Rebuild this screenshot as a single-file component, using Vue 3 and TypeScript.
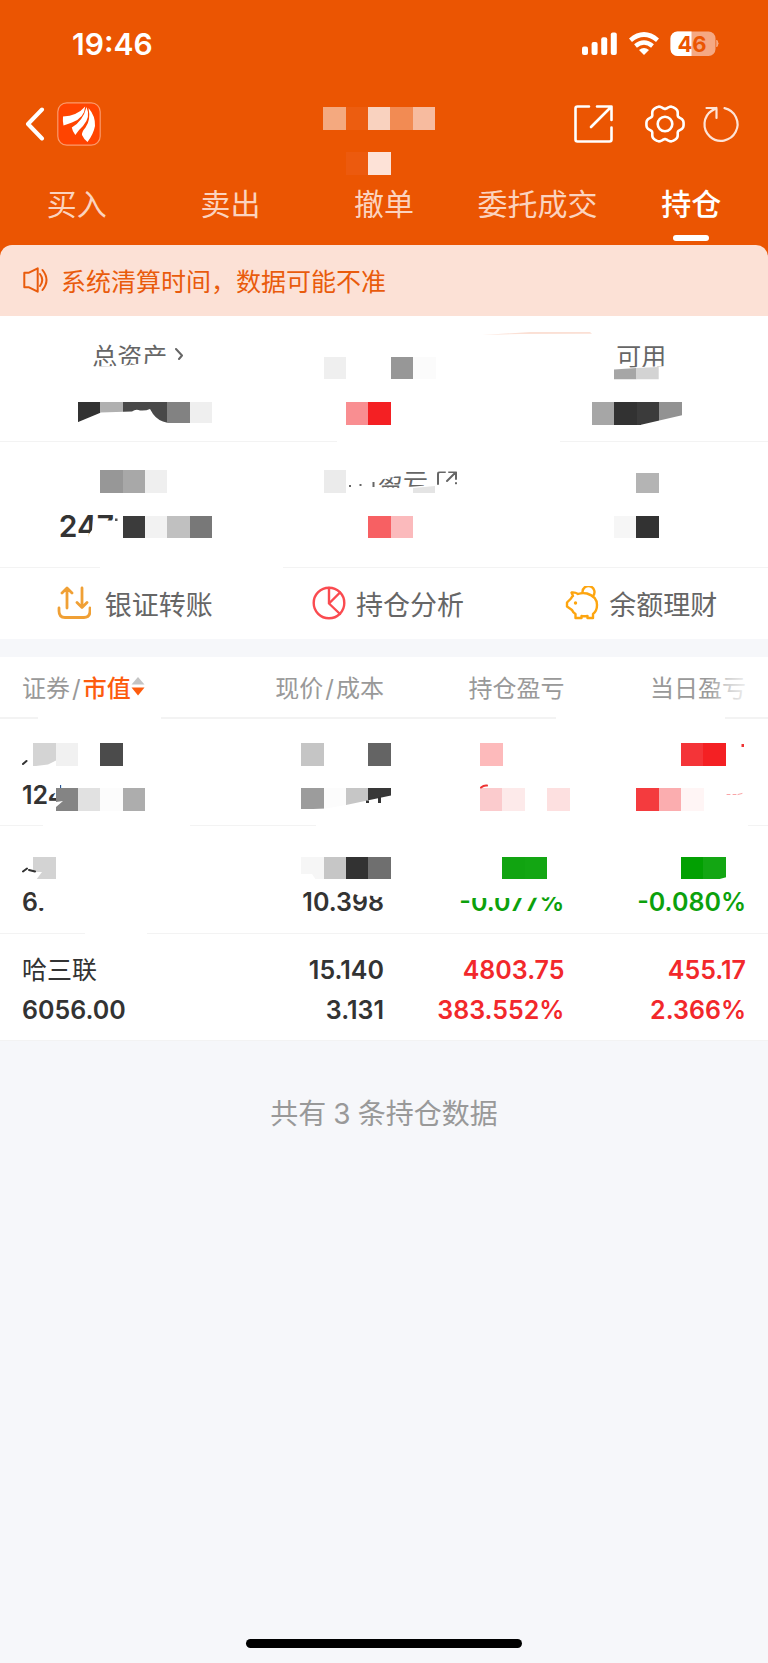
<script setup lang="ts">
import { ref } from 'vue'

type Block = [x: number, y: number, w: number, h: number, fill: string]

interface Cell {
  top: string
  bottom: string
  tone?: 'up' | 'down'
}

const tabs = ['买入', '卖出', '撤单', '委托成交', '持仓']
const activeTab = ref('持仓')

const rows: Cell[][] = [
  [
    { top: '', bottom: '124' },
    { top: '', bottom: '' },
    { top: '', bottom: '', tone: 'up' },
    { top: '', bottom: '', tone: 'up' },
  ],
  [
    { top: '', bottom: '6.' },
    { top: '', bottom: '10.398' },
    { top: '', bottom: '-0.077%', tone: 'down' },
    { top: '', bottom: '-0.080%', tone: 'down' },
  ],
  [
    { top: '哈三联', bottom: '6056.00' },
    { top: '15.140', bottom: '3.131' },
    { top: '4803.75', bottom: '383.552%', tone: 'up' },
    { top: '455.17', bottom: '2.366%', tone: 'up' },
  ],
]

/* Builds a horizontal run of mosaic blocks; an empty colour leaves a hole. */
const cell = 22.33
function run(x: number, y: number, h: number, fills: string[]): Block[] {
  return fills
    .map((fill, i): Block => [x + i * cell, y, cell + 0.2, h, fill])
    .filter((b) => b[4] !== '')
}

const headBlocks: Block[] = [
  ...run(323.4, 107, 22.5, ['#f4a97f', '#ec5d10', '#f9d2bf', '#f28b53', '#f7bb9f']),
  ...run(345.7, 152, 22.5, ['#ec5a0e', '#fde2d7']),
]

const assetBlocks: Block[] = [
  ...run(323.7, 357, 22.3, ['#efefef', '', '', '#979797', '#fbfbfb']),
  ...run(78, 402, 20.6, ['#323232', '#b0b0b0', '#494949', '#494949', '#828282', '#efefef']),
  ...run(346, 402, 22.6, ['#f98e91', '#f42023']),
  ...run(592, 402, 22.6, ['#a6a6a6', '#323232', '#3b3b3b', '#929292']),
  ...run(100.3, 470.4, 22.6, ['#979797', '#a8a8a8', '#efefef']),
  ...run(323.7, 470.4, 22.6, ['#ebebeb']),
  ...run(636.4, 473, 20, ['#b4b4b4']),
  ...run(122.8, 515.6, 22.8, ['#3b3b3b', '#f2f2f2', '#c0c0c0', '#787878']),
  ...run(368.3, 515.6, 22.8, ['#f76063', '#fbbabc']),
  ...run(614, 515.6, 22.8, ['#f6f6f6', '#323232']),
]

const tableBlocks: Block[] = [
  ...run(33.4, 743, 22.6, ['#d4d4d4', '#f1f1f1', '', '#4b4b4b']),
  ...run(301.3, 743, 22.6, ['#c5c5c5', '', '', '#646464']),
  ...run(480, 743, 22.6, ['#fdbabb']),
  ...run(681, 743, 22.6, ['#f43438', '#f42023']),
  ...run(55.7, 788.4, 22.8, ['#848484', '#e1e1e1', '#fcfcfc', '#adadad']),
  ...run(301.3, 788.4, 21, ['#9c9c9c', '#fcfcfc', '#c6c6c6', '#383838']),
  ...run(480, 788.4, 22.8, ['#fbcbcd', '#fdeaea', '', '#fde0e0']),
  ...run(636.4, 788.4, 22.8, ['#f43b3e', '#fbadaf', '#fff5f5']),
  ...run(33.4, 856.8, 22.6, ['#d3d3d3']),
  ...run(301.3, 856.8, 22.6, ['#f6f6f6', '#c6c6c6', '#323232', '#6f6f6f']),
  ...run(502.3, 856.8, 22.6, ['#11a411', '#13a613']),
  ...run(681, 856.8, 22.6, ['#02a002', '#13a613']),
]

/* Six-lobed outline of the settings cog. */
const cogPath =
  Array.from({ length: 73 }, (_, i) => {
    const a = (i * Math.PI) / 36
    const r = 17.3 + 1.8 * Math.cos(6 * a) - 0.5 * Math.cos(12 * a)
    return `${i ? 'L' : 'M'}${(20 + r * Math.cos(a)).toFixed(2)} ${(20 + r * Math.sin(a)).toFixed(2)}`
  }).join('') + 'Z'
</script>

<template>
  <div class="screen">
    <header class="head">
      <div class="status">
        <time class="clock">19:46</time>
        <div class="indicators">
          <svg class="signal" viewBox="0 0 36 24" aria-hidden="true">
            <rect x="0" y="14.5" width="6" height="8.5" rx="2" />
            <rect x="9.6" y="10" width="6" height="13" rx="2" />
            <rect x="19.2" y="5.2" width="6" height="17.8" rx="2" />
            <rect x="28.8" y="0.6" width="6" height="22.4" rx="2" />
          </svg>
          <svg class="wifi" viewBox="0 0 30 24" aria-hidden="true">
            <path d="M1.500 8.200Q15 -3.200 28.500 8.200" stroke-width="4.600" />
            <path d="M6.500 14Q15 7 23.500 14" stroke-width="4.400" />
            <path class="dot" d="M10 18Q15 14.200 20 18L15 23Z" />
          </svg>
          <svg class="battery" viewBox="0 0 50 26" aria-hidden="true">
            <rect x="0.5" y="0.5" width="45" height="24.6" rx="7" fill="#f5a883" />
            <path d="M21.500 .5H7.500a7 7 0 0 0-7 7v10.600a7 7 0 0 0 7 7h14z" fill="#fff" />
            <path d="M47 9.500q2.500 3 0 6z" fill="#f5a883" stroke="#f5a883" />
            <text x="22" y="20.600" text-anchor="middle">46</text>
          </svg>
        </div>
      </div>

      <div class="bar">
        <div class="bar-side">
          <button class="plain" type="button" aria-label="返回">
            <svg class="back" viewBox="0 0 20 34" aria-hidden="true">
              <path d="M17 2.500L3 17L17 31.500" />
            </svg>
          </button>
          <svg class="logo" viewBox="0 0 44 44" aria-hidden="true">
            <rect x="0.8" y="0.8" width="42.400" height="42.400" rx="9" fill="#ff4400" stroke="#fb9a6c" stroke-width="1.200" />
            <path d="M6 14.500Q20 14 28.200 4.500Q27.500 16 15 20.500Q11 22 6.500 23.500Q5.500 19 6 14.500Z" />
            <path d="M14.800 25.500Q26 19 29.500 5Q34 15 26 24Q21.500 28 18.300 33Q15.500 29.500 14.800 25.500Z" />
            <path d="M25 33Q24.500 30 28.500 25.500Q34 18 31.500 6Q38.500 14 38 24Q36.500 32 30.500 40Q27 37.500 25 33Z" />
          </svg>
        </div>
        <div class="bar-tools">
          <button class="plain" type="button" aria-label="分享">
            <svg class="tool" viewBox="0 0 40 40" aria-hidden="true">
              <path d="M16 2.500H4.500q-2 0-2 2V35.500q0 2 2 2H36.500q2 0 2-2V23.500M24 2.500H38.500V16M18 23L38 3" />
            </svg>
          </button>
          <button class="plain cog" type="button" aria-label="设置">
            <svg class="tool" viewBox="0 0 40 40" aria-hidden="true">
              <path :d="cogPath" />
              <circle cx="20" cy="20" r="7.300" />
            </svg>
          </button>
          <button class="plain" type="button" aria-label="刷新">
            <svg class="tool thin" viewBox="0 0 40 40" aria-hidden="true">
              <path d="M23.500 4.200A16.500 16.500 0 1 1 11 6.500M5.500 4H15.500V14M10.500 7L15.500 4" />
            </svg>
          </button>
        </div>
      </div>

      <nav class="tabs" aria-label="交易">
        <button
          v-for="tab in tabs"
          :key="tab"
          type="button"
          class="tab"
          :class="{ active: tab === activeTab }"
          @click="activeTab = tab"
        >
          {{ tab }}
        </button>
      </nav>

      <svg class="veil" viewBox="0 0 768 245" preserveAspectRatio="none" shape-rendering="crispEdges" aria-hidden="true">
        <rect v-for="(b, i) in headBlocks" :key="i" :x="b[0]" :y="b[1]" :width="b[2]" :height="b[3]" :fill="b[4]" />
      </svg>
    </header>

    <div class="notice-wrap">
      <p class="notice">
        <svg class="speaker" viewBox="0 0 26 26" aria-hidden="true">
          <path d="M1.300 5.700H6L14.700 1.300V24.700L6 20.300H1.300ZM17 7Q21.500 13 17 19M19.500 3Q27.500 13 19.500 23" />
        </svg>
        系统清算时间，数据可能不准
      </p>
    </div>

    <section class="assets">
      <div class="asset-row">
        <div class="asset">
          <span class="label leading">
            总资产
            <svg class="chevron" viewBox="0 0 8 14" aria-hidden="true"><path d="M1 1L7 7.500L4 11" /></svg>
          </span>
          <span class="value"></span>
        </div>
        <div class="asset"></div>
        <div class="asset">
          <span class="label">可用</span>
          <span class="value"></span>
        </div>
      </div>
      <div class="asset-row">
        <div class="asset">
          <span class="label"></span>
          <span class="value wide">247</span>
        </div>
        <div class="asset">
          <span class="label trailing">
            盈亏
            <svg class="open" viewBox="0 0 22 22" aria-hidden="true">
              <path d="M9 2H4q-2 0-2 2v16h18v-7M13 2h7v7M11 11l9-9" />
            </svg>
          </span>
          <span class="value"></span>
        </div>
        <div class="asset"></div>
      </div>
      <div class="actions">
        <button type="button" class="action">
          <svg class="action-icon transfer" viewBox="0 0 34 34" aria-hidden="true">
            <path d="M10 22V3M5 7L10 2L15 7M25 2V21M20 16.500L25 21.500L30 16.500M2 22V25q0 6.500 6 6.500H27q6 0 6-6.500V22" />
          </svg>
          银证转账
        </button>
        <button type="button" class="action">
          <svg class="action-icon pie" viewBox="0 0 34 34" aria-hidden="true">
            <circle cx="17" cy="17" r="15.300" />
            <path d="M17 2V17.500L28 28M17 17.500L28 6.500" />
          </svg>
          持仓分析
        </button>
        <button type="button" class="action">
          <svg class="action-icon pig" viewBox="0 0 34 34" aria-hidden="true">
            <path d="M6.500 6.500Q10 6 13 8Q17 6.500 22 7.500Q32 10.500 32 19Q32 25 28 28V32H22.500V30Q19 30.500 16.500 30V32H10.500V28Q8 26.500 7 24L2 20.500V16.500L6 12.500Q7 10.500 8 10Z" />
            <path d="M17.500 6.500A6 6 0 1 1 28 10" />
            <circle class="eye" cx="10.500" cy="17" r="1.700" />
          </svg>
          余额理财
        </button>
      </div>

      <svg class="veil" viewBox="0 316 768 323" preserveAspectRatio="none" aria-hidden="true">
        <g fill="#fff">
          <path d="M337 439H560V445H337ZM100 564H283V571H100Z" />
          <path d="M88 366.500L120 366L135 364.500L170 362.500V382H88Z" />
          <path d="M608 368.500L640 367L668 366V382H608Z" />
          <path d="M93 519H99V520.500H120V544H86L89 534L92 530Z" />
          <path d="M372 462H398L402 475L384 479L372 482ZM398 462H460V471.500H398ZM372 487L400 488L430 485L462 484V502H372Z" />
        </g>
        <path d="M482 335L530 332H590L592 333.800L520 334Z" fill="#fbe0d5" />
        <g shape-rendering="crispEdges">
          <rect v-for="(b, i) in assetBlocks" :key="i" :x="b[0]" :y="b[1]" :width="b[2]" :height="b[3]" :fill="b[4]" />
        </g>
        <path d="M614 369.500L636.500 368V379.300H614Z" fill="#a6a6a6" />
        <path d="M636.500 368L658.700 367V379.300H636.500Z" fill="#d3d3d3" />
        <path d="M413 488L435 486V493H413Z" fill="#e4e4e4" />
        <g fill="#fff">
          <path d="M77 422.500L101 412.500L132 411.500Q136 408.500 140 410.500Q146 411 150 409L153 414Q158 421 167.300 422.700V425H77Z" />
          <path d="M641 424.800L682 415.300V426H641Z" />
        </g>
        <path d="M349 485h2v2h-2zM359.500 484h2v2h-2zM372.500 482h2v5h-2z" fill="#666" />
        <rect x="115" y="518.500" width="2.500" height="2.500" fill="#555" />
      </svg>
    </section>

    <section class="holdings">
      <table>
        <thead>
          <tr>
            <th scope="col">证券<span class="slash">/</span><button type="button" class="sort">市值<svg viewBox="0 0 14 20" aria-hidden="true"><path d="M7 1L13.500 8.500H0.500Z" fill="#c4c4c4" /><path d="M7 19.500L0.500 11.500H13.500Z" fill="#fd5c0e" /></svg></button></th>
            <th scope="col">现价<span class="slash">/</span>成本</th>
            <th scope="col">持仓盈亏</th>
            <th scope="col">当日盈亏</th>
          </tr>
        </thead>
        <tbody>
          <tr v-for="(row, r) in rows" :key="r">
            <td v-for="(c, i) in row" :key="i" :class="c.tone">
              <span class="line">{{ c.top }}</span>
              <span class="line">{{ c.bottom }}</span>
            </td>
          </tr>
        </tbody>
      </table>

      <svg class="veil" viewBox="0 657 768 384" preserveAspectRatio="none" aria-hidden="true">
        <defs>
          <linearGradient id="fade" x1="0" x2="1" y1="0" y2="0">
            <stop offset="0" stop-color="#fff" stop-opacity="0" />
            <stop offset="0.500" stop-color="#fff" stop-opacity="0.550" />
            <stop offset="1" stop-color="#fff" stop-opacity="0.850" />
          </linearGradient>
        </defs>
        <rect x="708" y="672" width="40" height="32" fill="url(#fade)" />
        <path d="M38 715H161V721H38ZM556 715H725V721H556ZM43 823H190V828H43ZM316 823H748V828H316ZM85 931H147V936H85Z" fill="#fff" />
        <path d="M49 782H60V793H55L50 795ZM50 801H62V807H50ZM352 888H386V897.500L378 897L370 895.500L362 897L352 893ZM468 888H565V896.500L530 898H468ZM34 888H50V908H38Z" fill="#fff" />
        <g shape-rendering="crispEdges">
          <rect v-for="(b, i) in tableBlocks" :key="i" :x="b[0]" :y="b[1]" :width="b[2]" :height="b[3]" :fill="b[4]" />
        </g>
        <path d="M300 809.500L326 808.500L346 805L391 795.500V812H300ZM36 766L48 764.500L56 760.500V767H36ZM33 872H42L36 880H33ZM56 811.500V807L63 801L56 802ZM301 874H312L316 880H301ZM716 880L727 877V881Z" fill="#fff" />
        <path d="M366 800.500h3v2.500h-3zM378 797l3-1v7h-3z" fill="#333" />
        <path d="M23 764L26.500 761M23 871.500L27 868.500M29 870L35 871.500" fill="none" stroke="#333" stroke-width="2" />
        <path d="M481 787.500Q484 785 487 785.500" fill="none" stroke="#e33" stroke-width="2" />
        <rect x="741.500" y="744" width="2.500" height="3" fill="#e33" />
        <path d="M727 794.500h3M733 794.500h3M738 794.500l4-1" fill="none" stroke="#f9a5a7" />
      </svg>
    </section>

    <p class="total">共有<span class="count">3</span>条持仓数据</p>
    <div class="home"></div>
  </div>
</template>

<style>
body {
  margin: 0;
  background: #f6f7fa;
}
</style>

<style scoped>
.screen {
  display: flex;
  flex-direction: column;
  min-height: 100vh;
  background: #f6f7fa;
  color: #333;
  font-family: Inter, 'Noto Sans CJK SC', sans-serif;
}

button {
  margin: 0;
  padding: 0;
  border: 0;
  background: none;
  color: inherit;
  font: inherit;
}

p {
  margin: 0;
}

svg {
  display: block;
  flex: none;
  fill: none;
  stroke-linecap: round;
  stroke-linejoin: round;
}

.veil {
  position: absolute;
  top: 0;
  left: 0;
  width: 100%;
  height: 100%;
  pointer-events: none;
}

.head {
  position: relative;
  background: #eb5502;
  color: #fff;
}

.status {
  display: flex;
  align-items: center;
  justify-content: space-between;
  height: 88px;
  padding: 0 48px 0 72px;
}

.clock {
  font-size: 30px;
  font-weight: 600;
}

.indicators {
  display: flex;
  align-items: center;
  gap: 11px;
}

.signal {
  width: 36px;
  height: 24px;
  fill: #fff;
}

.wifi {
  width: 30px;
  height: 24px;
  stroke: #fff;
  stroke-linecap: butt;
}

.wifi .dot {
  fill: #fff;
  stroke: none;
}

.battery {
  width: 50px;
  height: 26px;
}

.battery text {
  fill: #eb5502;
  font-size: 22px;
  font-weight: 700;
}

.bar {
  display: flex;
  align-items: center;
  justify-content: space-between;
  height: 72px;
  padding: 0 27px 0 25px;
}

.bar-side,
.bar-tools {
  display: flex;
  align-items: center;
}

.bar-side {
  gap: 12px;
}

.back {
  width: 20px;
  height: 34px;
  stroke: #fff;
  stroke-width: 4;
}

.logo {
  width: 44px;
  height: 44px;
  fill: #fff;
}

.tool {
  width: 40px;
  height: 40px;
  stroke: #fff;
  stroke-width: 2.6;
}

.tool.thin {
  stroke: #fde3d6;
  stroke-width: 2.2;
}

.cog {
  margin: 0 16px 0 32px;
}

.tabs {
  display: grid;
  grid-template-columns: repeat(5, 1fr);
}

.tab {
  display: flex;
  flex-direction: column;
  align-items: center;
  padding: 24px 0 4px;
  color: #fbd3bf;
  font-size: 30px;
  line-height: 40px;
}

.tab::after {
  content: '';
  width: 36px;
  height: 6px;
  margin-top: 11px;
  border-radius: 3px;
}

.tab.active {
  color: #fff;
  font-weight: 500;
}

.tab.active::after {
  background: #fff;
}

.notice-wrap {
  background: #eb5502;
}

.notice {
  display: flex;
  align-items: center;
  gap: 12px;
  box-sizing: border-box;
  height: 71px;
  padding: 0 23px 2px;
  border-radius: 12px 12px 0 0;
  background: #fce1d6;
  color: #e95b0c;
  font-size: 25px;
}

.speaker {
  width: 26px;
  height: 26px;
  stroke: #e95b0c;
  stroke-width: 2;
}

.assets,
.holdings {
  position: relative;
  background: #fff;
}

.asset-row,
.actions {
  display: grid;
  grid-template-columns: repeat(3, 1fr);
  box-sizing: border-box;
  padding-left: 8px;
}

.asset-row {
  min-height: 126px;
  padding-top: 21px;
  border-bottom: 1px solid #f3f3f3;
}

.asset {
  display: flex;
  flex-direction: column;
  align-items: center;
  gap: 9px;
}

.label {
  display: flex;
  align-items: center;
  gap: 8px;
  height: 36px;
  color: #666;
  font-size: 25px;
}

.label.leading {
  padding-left: 6px;
}

.label.trailing {
  padding-left: 60px;
}

.value {
  height: 36px;
  font-size: 30px;
  font-weight: 600;
  line-height: 36px;
}

.value.wide {
  width: 152px;
}

.chevron {
  width: 8px;
  height: 14px;
  stroke: #666;
  stroke-width: 2;
}

.open {
  width: 22px;
  height: 22px;
  stroke: #666;
  stroke-width: 2;
}

.actions {
  height: 71px;
  padding-bottom: 1px;
}

.action {
  display: flex;
  align-items: center;
  justify-content: center;
  gap: 10px;
  color: #666;
  font-size: 27px;
}

.action-icon {
  width: 34px;
  height: 34px;
  stroke-width: 2.4;
}

.transfer {
  margin-right: 4px;
  stroke: #f0a035;
  stroke-width: 2.8;
}

.pie {
  stroke: #fa4b50;
}

.pig {
  stroke: #fda50f;
}

.pig .eye {
  fill: #fda50f;
  stroke: none;
}

.holdings {
  margin-top: 18px;
}

table {
  width: 100%;
  table-layout: fixed;
  border-collapse: separate;
  border-spacing: 0;
}

th,
td {
  box-sizing: border-box;
  padding: 0;
  text-align: right;
  white-space: nowrap;
}

th {
  width: 25%;
  height: 62px;
  padding-bottom: 2px;
  border-bottom: 2px solid #f3f3f3;
  color: #999;
  font-size: 24px;
  font-weight: 400;
}

th:nth-child(3) {
  width: 23.5%;
}

th:last-child {
  width: 26.5%;
}

th:first-child,
td:first-child {
  padding-left: 22px;
  text-align: left;
}

th:last-child,
td:last-child {
  padding-right: 22px;
}

.slash {
  margin: 0 2px;
}

.sort {
  display: inline-flex;
  align-items: center;
  color: #fd5c0e;
  font-weight: 500;
}

.sort svg {
  width: 14px;
  height: 20px;
}

td {
  height: 108px;
  padding-top: 5px;
  border-bottom: 1px solid #f3f3f3;
  font-size: 25px;
  font-weight: 600;
}

tbody tr:first-child td,
tbody tr:last-child td {
  height: 107px;
}

td .line {
  display: block;
  height: 40px;
  line-height: 40px;
}

td:first-child .line:first-child {
  font-weight: 400;
}

.up {
  color: #f2282b;
}

.down {
  color: #0ca10c;
}

.total {
  padding-top: 53px;
  color: #999;
  font-size: 28px;
  line-height: 40px;
  text-align: center;
}

.count {
  margin: 0 7px;
}

.home {
  width: 36%;
  height: 9px;
  margin: auto auto 15px;
  border-radius: 5px;
  background: #000;
}
</style>
